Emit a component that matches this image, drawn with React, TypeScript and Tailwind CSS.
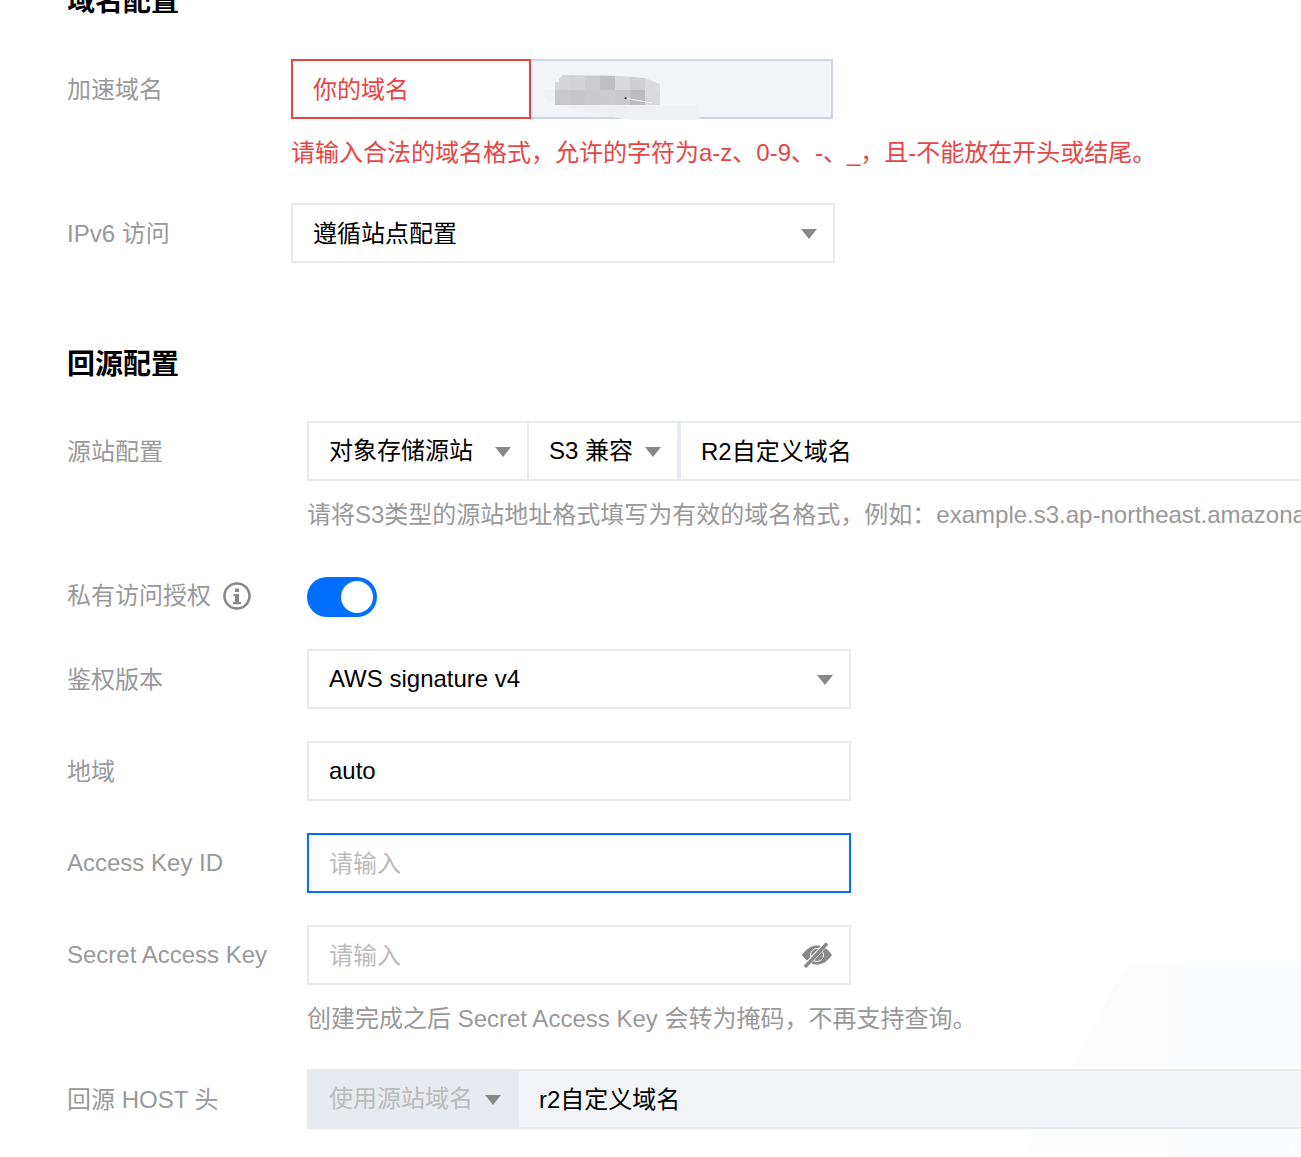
const fontCls = "font-['Liberation_Sans','Noto_Sans_CJK_SC',sans-serif]"

const Arrow = ({ className = "" }: { className?: string }) => (
  <svg width="16" height="10" viewBox="0 0 16 10" className={`mt-[2px] shrink-0 ${className}`}>
    <polygon points="0,0 16,0 8,10" fill="#888888" />
  </svg>
)

const InfoIcon = () => (
  <svg width="28" height="28" viewBox="0 0 28 28" className="ml-3 shrink-0">
    <circle cx="14" cy="14" r="12.5" fill="none" stroke="#888888" strokeWidth="2.600" />
    <rect x="12" y="6.500" width="4" height="3.500" fill="#888888" />
    <path d="M10.500 12h5.500v8h2v2.200h-8V20h2v-5.800h-1.500z" fill="#888888" />
  </svg>
)

const EyeOff = () => (
  <svg width="32" height="26" viewBox="0 0 32 26" className="shrink-0">
    <path d="M1 13C6 6 10.500 3.500 16 3.500s10 2.500 15 9.500C26 20 21.500 22.500 16 22.500S6 20 1 13z" fill="#888888" />
    <circle cx="16" cy="13" r="6.500" fill="none" stroke="#ffffff" strokeWidth="1" />
    <path d="M3.500 25 L25.500 1.500" stroke="#ffffff" strokeWidth="5" />
    <path d="M4 25 L26 1.500" stroke="#888888" strokeWidth="3.400" />
  </svg>
)

const Smudge = () => (
  <svg width="180" height="70" viewBox="0 0 180 70" className="absolute -top-[1px] left-[4px]">
    <defs>
      <clipPath id="tiles">
        <polygon points="20,22 24,22 24,19 28,15 85,16 110,18 125,24 125,45 20,45" />
      </clipPath>
    </defs>
    <polygon points="8,30 20,30 125,45 163,45 165,58 162,60 95,60 83,58 30,47 12,40" fill="#eef0f3" />
    <g clipPath="url(#tiles)">
      <rect x="20" y="15" width="15" height="15" fill="#d6d6d9" />
      <rect x="35" y="15" width="15" height="15" fill="#d3d3d6" />
      <rect x="50" y="15" width="15" height="15" fill="#cdcdd0" />
      <rect x="65" y="15" width="15" height="15" fill="#bfbfc2" />
      <rect x="80" y="15" width="15" height="15" fill="#d9d9dc" />
      <rect x="95" y="15" width="15" height="15" fill="#cfcfd2" />
      <rect x="110" y="15" width="15" height="15" fill="#dcdcdf" />
      <rect x="20" y="30" width="15" height="15" fill="#c9c9cc" />
      <rect x="35" y="30" width="15" height="15" fill="#c6c6c9" />
      <rect x="50" y="30" width="15" height="15" fill="#c9c9cc" />
      <rect x="65" y="30" width="15" height="15" fill="#cccccf" />
      <rect x="80" y="30" width="15" height="15" fill="#c9c9cc" />
      <rect x="95" y="30" width="15" height="15" fill="#bcbcbf" />
      <rect x="110" y="30" width="15" height="15" fill="#d9d9dc" />
    </g>
    <path d="M92 38.500 L117 43" stroke="#ffffff" strokeWidth="1" />
    <rect x="89.500" y="37.500" width="2" height="1.500" fill="#222222" />
  </svg>
)

const Label = ({ children, w, cjk }: { children: React.ReactNode; w: string; cjk?: boolean }) => (
  <div className={`flex h-[60px] shrink-0 items-center text-[24px] text-[#999999] ${w} ${cjk ? "pt-[2px]" : ""}`}>{children}</div>
)

const Title = ({ children, className = "" }: { children: React.ReactNode; className?: string }) => (
  <div className={`h-10 pt-[1px] text-[28px] leading-10 font-bold text-black ${className}`}>{children}</div>
)

const boxCls = "flex h-[60px] items-center border-2 border-[#e7eaef] bg-white pl-5 text-[24px]"

const App = () => {
  return (
    <div className={`relative h-[1157px] w-[1301px] overflow-hidden bg-white text-black ${fontCls}`}>
      <svg width="1301" height="1157" className="absolute top-0 left-0">
        <defs>
          <linearGradient id="shade" x1="0" y1="0" x2="1" y2="0">
            <stop offset="0" stopColor="#fdfdfe" />
            <stop offset="1" stopColor="#fbfcfd" />
          </linearGradient>
        </defs>
        <polygon points="1127,964 1301,964 1301,1157 1022,1157" fill="url(#shade)" />
        <path d="M1301 1130 L1287 1157" stroke="#ffffff" strokeWidth="1" />
      </svg>

      <div className="relative -mt-[19px] flex flex-col pl-[67px]">
        <Title>域名配置</Title>

        <div className="mt-[38px] flex">
          <Label w="w-[224px]" cjk>加速域名</Label>
          <div className="flex h-[60px] w-[542px]">
            <div className="flex w-[240px] items-center border-2 border-[#e54545] pt-[2px] pl-5 text-[24px] text-[#e54545]">你的域名</div>
            <div className="relative flex-1 border-2 border-l-0 border-[#ced5e0] bg-[#f2f4f8]">
              <Smudge />
            </div>
          </div>
        </div>
        <div className="mt-[14px] ml-[224px] text-[24px] leading-10 whitespace-nowrap text-[#e54545]">
          请输入合法的域名格式，允许的字符为a-z、0-9、-、_，且-不能放在开头或结尾。
        </div>

        <div className="mt-[30px] flex">
          <Label w="w-[224px]" cjk>IPv6 访问</Label>
          <div className={`${boxCls} w-[544px] justify-between pr-[16px]`}>
            <span className="pt-[2px]">遵循站点配置</span>
            <Arrow />
          </div>
        </div>

        <Title className="mt-[81px]">回源配置</Title>

        <div className="mt-[37px] flex">
          <Label w="w-[240px]" cjk>源站配置</Label>
          <div className="flex w-[1100px] shrink-0">
            <div className={`${boxCls} w-[222px] justify-between pr-[16px]`}>
              <span>对象存储源站</span>
              <Arrow />
            </div>
            <div className={`${boxCls} -ml-[2px] w-[152px] justify-between pr-[16px]`}>
              <span>S3 兼容</span>
              <Arrow />
            </div>
            <div className={`${boxCls} flex-1 pt-[2px]`}>R2自定义域名</div>
          </div>
        </div>
        <div className="mt-[14px] ml-[240px] text-[24px] leading-10 whitespace-nowrap text-[#999999]">
          请将S3类型的源站地址格式填写为有效的域名格式，例如：example.s3.ap-northeast.amazonaws.com
        </div>

        <div className="mt-[42px] flex h-10 items-center">
          <div className="flex w-[240px] items-center pb-[3px] text-[24px] text-[#999999]">
            私有访问授权
            <InfoIcon />
          </div>
          <div className="flex h-10 w-[70px] items-center justify-end rounded-full bg-[#006eff] pr-[4px]">
            <div className="h-8 w-8 rounded-full bg-white" />
          </div>
        </div>

        <div className="mt-[32px] flex">
          <Label w="w-[240px]" cjk>鉴权版本</Label>
          <div className={`${boxCls} w-[544px] justify-between pr-[16px]`}>
            <span>AWS signature v4</span>
            <Arrow />
          </div>
        </div>

        <div className="mt-[32px] flex">
          <Label w="w-[240px]" cjk>地域</Label>
          <div className={`${boxCls} w-[544px]`}>auto</div>
        </div>

        <div className="mt-[32px] flex">
          <Label w="w-[240px]">Access Key ID</Label>
          <div className="flex h-[60px] w-[544px] items-center border-2 border-[#006eff] pt-[2px] pl-5 text-[24px] text-[#bbbbbb]">请输入</div>
        </div>

        <div className="mt-[32px] flex">
          <Label w="w-[240px]">Secret Access Key</Label>
          <div className={`${boxCls} w-[544px] justify-between pr-[16px] text-[#bbbbbb]`}>
            <span className="pt-[2px]">请输入</span>
            <EyeOff />
          </div>
        </div>
        <div className="mt-[14px] ml-[240px] text-[24px] leading-10 whitespace-nowrap text-[#999999]">
          创建完成之后 Secret Access Key 会转为掩码，不再支持查询。
        </div>

        <div className="mt-[30px] flex">
          <Label w="w-[240px]" cjk>回源 HOST 头</Label>
          <div className="flex h-[60px] w-[1100px] shrink-0">
            <div className="flex w-[212px] items-center justify-between bg-[#e7eaef] pr-[18px] pl-[22px] text-[24px] text-[#bbbbbb]">
              <span>使用源站域名</span>
              <Arrow />
            </div>
            <div className="flex flex-1 items-center border-y-2 border-[#e7eaef] bg-[#f2f4f8] pt-[2px] pl-5 text-[24px]">r2自定义域名</div>
          </div>
        </div>
      </div>
    </div>
  )
}

export default App
